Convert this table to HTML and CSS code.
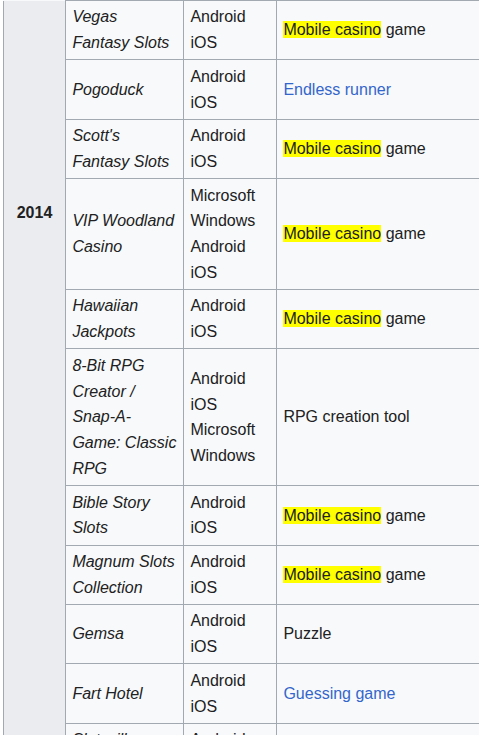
FILE: index.html
```html
<!DOCTYPE html>
<html lang="en">
<head>
<meta charset="utf-8">
<title>Games</title>
<link rel="stylesheet" href="styles.css">
</head>
<body>
<div class="page">
<table class="wikitable">
  <colgroup>
    <col class="c-year">
    <col class="c-title">
    <col class="c-platform">
    <col class="c-genre">
  </colgroup>
  <tbody>
    <tr>
      <th class="year" rowspan="11">2014</th>
      <td class="title">Vegas Fantasy Slots</td>
      <td>Android<br>iOS</td>
      <td><span class="hl">Mobile casino</span> game</td>
    </tr>
    <tr>
      <td class="title">Pogoduck</td>
      <td>Android<br>iOS</td>
      <td><a href="#">Endless runner</a></td>
    </tr>
    <tr>
      <td class="title">Scott's Fantasy Slots</td>
      <td>Android<br>iOS</td>
      <td><span class="hl">Mobile casino</span> game</td>
    </tr>
    <tr>
      <td class="title">VIP Woodland Casino</td>
      <td>Microsoft Windows<br>Android<br>iOS</td>
      <td><span class="hl">Mobile casino</span> game</td>
    </tr>
    <tr>
      <td class="title">Hawaiian Jackpots</td>
      <td>Android<br>iOS</td>
      <td><span class="hl">Mobile casino</span> game</td>
    </tr>
    <tr>
      <td class="title">8-Bit RPG Creator / Snap-A-Game: Classic RPG</td>
      <td>Android<br>iOS<br>Microsoft Windows</td>
      <td>RPG creation tool</td>
    </tr>
    <tr>
      <td class="title">Bible Story Slots</td>
      <td>Android<br>iOS</td>
      <td><span class="hl">Mobile casino</span> game</td>
    </tr>
    <tr>
      <td class="title">Magnum Slots Collection</td>
      <td>Android<br>iOS</td>
      <td><span class="hl">Mobile casino</span> game</td>
    </tr>
    <tr>
      <td class="title">Gemsa</td>
      <td>Android<br>iOS</td>
      <td>Puzzle</td>
    </tr>
    <tr>
      <td class="title">Fart Hotel</td>
      <td>Android<br>iOS</td>
      <td><a href="#">Guessing game</a></td>
    </tr>
    <tr>
      <td class="title top">Slotsville<br>Holiday</td>
      <td class="top">Android<br>iOS</td>
      <td><span class="hl">Mobile casino</span> game</td>
    </tr>
  </tbody>
</table>
</div>
</body>
</html>
```
FILE: styles.css
```css
html, body {
  margin: 0;
  padding: 0;
  background: #ffffff;
  overflow: hidden;
}

.page {
  padding-left: 3px;
  font-family: "Liberation Sans", Arial, sans-serif;
  font-size: 16px;
  line-height: 25.8px;
  color: #202122;
}

.wikitable {
  border-collapse: collapse;
  table-layout: fixed;
  width: 520px;
  background: #f8f9fa;
  color: #202122;
}

.c-year { width: 62px; }
.c-title { width: 118px; }
.c-platform { width: 93px; }
.c-genre { width: 247px; }

.wikitable th,
.wikitable td {
  border: 1px solid #a2a9b1;
  padding: 3.4px 6.4px;
  vertical-align: middle;
  text-align: left;
}

.wikitable th.year {
  background: #eaecf0;
  text-align: center;
  vertical-align: top;
  font-weight: bold;
  border-top: hidden;
  padding-top: 199px;
}

.wikitable tr:first-child td {
  border-top: 1px solid #a2a9b1;
}

.title {
  font-style: italic;
}

.top {
  vertical-align: top;
}

.hl {
  background: #ffff00;
}

a {
  color: #3366cc;
  text-decoration: none;
}
```
